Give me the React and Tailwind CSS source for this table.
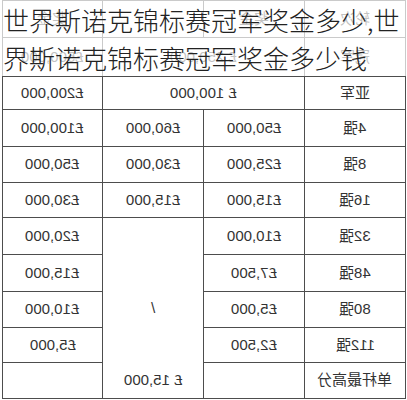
const rows = [
  { h: "h-[37px]", faded: true, cells: [{ t: "奖金" }, { t: "" }, { t: "奖金" }, { t: "轮次" }] },
  { h: "h-[39px]", faded: true, cells: [{ t: "£500,000" }, { t: "£ 250,000", span: 2 }, { t: "冠军" }] },
  { h: "h-[33px]", cells: [{ t: "£200,000" }, { t: "£ 100,000", span: 2 }, { t: "亚军" }] },
  { h: "h-[37px]", cells: [{ t: "£100,000" }, { t: "£60,000" }, { t: "£50,000" }, { t: "4强" }] },
  { h: "h-[36px]", cells: [{ t: "£50,000" }, { t: "£30,000" }, { t: "£25,000" }, { t: "8强" }] },
  { h: "h-[35px]", cells: [{ t: "£30,000" }, { t: "£15,000" }, { t: "£15,000" }, { t: "16强" }] },
  { h: "h-[37px]", cells: [{ t: "£20,000" }, { t: "/", rows: 5 }, { t: "£10,000" }, { t: "32强" }] },
  { h: "h-[37px]", cells: [{ t: "£15,000" }, { t: "£7,500" }, { t: "48强" }] },
  { h: "h-[36px]", cells: [{ t: "£10,000" }, { t: "£5,000" }, { t: "80强" }] },
  { h: "h-[35px]", cells: [{ t: "£5,000" }, { t: "£2,500" }, { t: "112强" }] },
  { h: "h-[36px]", cells: [{ t: "£ 15,000", span: 3 }, { t: "单杆最高分" }] },
];

export default function App() {
  return (
    <div className="relative h-[400px] w-[407px] overflow-hidden bg-white" style={{ fontFamily: '"Liberation Sans", "Noto Sans CJK SC", sans-serif' }}>
      <table className="ml-[2px] w-[403px] table-fixed border-collapse text-[15px] text-[#333]">
        <colgroup>
          <col className="w-[100px]" />
          <col className="w-[101px]" />
          <col className="w-[101px]" />
          <col className="w-[101px]" />
        </colgroup>
        <tbody>
          {rows.map((row, i) => (
            <tr key={i} className={row.h}>
              {row.cells.map((cell, j) => (
                <td key={j} colSpan={cell.span || 1} rowSpan={cell.rows || 1} className="border border-[#4d4d4d] p-0 text-center align-middle">
                  <span className="inline-block -scale-x-100">{cell.t}</span>
                </td>
              ))}
            </tr>
          ))}
        </tbody>
      </table>

      {/* title laid over the top of the faded picture */}
      <div className="absolute left-0 right-0 top-0 h-[76px] bg-white/70 pl-[3px] pt-[1px] text-[26px] font-light leading-[38px] text-[#222]" style={{ fontFamily: '"Noto Sans CJK SC", sans-serif' }}>
        世界斯诺克锦标赛冠军奖金多少,世界斯诺克锦标赛冠军奖金多少钱
      </div>
    </div>
  );
}
